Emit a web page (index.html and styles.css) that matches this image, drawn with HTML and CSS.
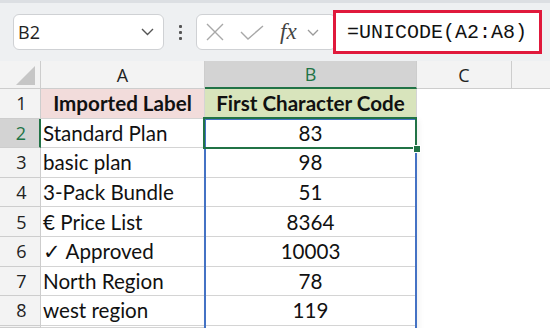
FILE: index.html
```html
<!DOCTYPE html>
<html lang="en">
<head>
    <meta charset="UTF-8">
    <meta name="viewport" content="width=device-width, initial-scale=1.0">
    <title>UNICODE example</title>
    <link rel="stylesheet" href="styles.css">
</head>
<body>
    <div class="toolbar">
        <div class="name-box">
            <span class="cell-ref">B2</span>
            <svg class="chev" width="13" height="8" viewBox="0 0 13 8"><polyline points="1,1 6.5,6.5 12,1" fill="none" stroke="#555" stroke-width="1.4"/></svg>
        </div>
        <div class="grip"><span></span><span></span><span></span></div>
        <div class="fx-box">
            <svg width="18" height="18" viewBox="0 0 18 18"><path d="M1 1 L17 17 M17 1 L1 17" stroke="#a8a8a8" stroke-width="1.4" fill="none"/></svg>
            <svg width="24" height="15" viewBox="0 0 24 15"><polyline points="1,7 8,14 23,1" fill="none" stroke="#a8a8a8" stroke-width="1.4"/></svg>
            <span class="fx">fx</span>
            <svg width="12" height="7" viewBox="0 0 12 7"><polyline points="1,1 6,6 11,1" fill="none" stroke="#9a9a9a" stroke-width="1.3"/></svg>
        </div>
        <div class="formula">=UNICODE(A2:A8)</div>
    </div>

    <div class="sheet">
        <div class="hd corner"><span class="tri"></span></div>
        <div class="hd col">A</div>
        <div class="hd col active-col">B</div>
        <div class="hd col">C</div>
        <div class="hd col last"></div>

        <div class="hd row">1</div>
        <div class="cell title pink">Imported Label</div>
        <div class="cell title green">First Character Code</div>
        <div class="blank"></div><div class="blank"></div>

        <div class="hd row active-row">2</div>
        <div class="cell">Standard Plan</div>
        <div class="cell num">83</div>
        <div class="blank"></div><div class="blank"></div>

        <div class="hd row">3</div>
        <div class="cell">basic plan</div>
        <div class="cell num">98</div>
        <div class="blank"></div><div class="blank"></div>

        <div class="hd row">4</div>
        <div class="cell">3-Pack Bundle</div>
        <div class="cell num">51</div>
        <div class="blank"></div><div class="blank"></div>

        <div class="hd row">5</div>
        <div class="cell">€ Price List</div>
        <div class="cell num">8364</div>
        <div class="blank"></div><div class="blank"></div>

        <div class="hd row">6</div>
        <div class="cell">✓ Approved</div>
        <div class="cell num">10003</div>
        <div class="blank"></div><div class="blank"></div>

        <div class="hd row">7</div>
        <div class="cell">North Region</div>
        <div class="cell num">78</div>
        <div class="blank"></div><div class="blank"></div>

        <div class="hd row">8</div>
        <div class="cell">west region</div>
        <div class="cell num">119</div>
        <div class="blank"></div><div class="blank"></div>

        <div class="hd row"></div>
        <div class="cell"></div>
        <div class="blank"></div>
        <div class="blank"></div><div class="blank"></div>

        <div class="range"></div>
        <div class="selection"><span class="handle"></span></div>
    </div>
</body>
</html>
```

FILE: styles.css
```css
* {
    box-sizing: border-box;
}

body {
    margin: 0;
    background: #fff;
    font-family: 'Lato', sans-serif;
    overflow: hidden;
}

.toolbar {
    height: 61px;
    background: #eef0f2;
    border-top: 3px solid #dcdfe3;
    display: flex;
    align-items: center;
    padding-left: 13px;
}

.name-box {
    width: 151px;
    height: 36px;
    background: #fff;
    border: 1px solid #cfd1d4;
    border-radius: 6px;
    display: flex;
    align-items: center;
    justify-content: space-between;
    padding: 0 9px 0 4px;
}

.cell-ref {
    font-family: 'Open Sans', sans-serif;
    font-size: 18px;
    color: #222;
}

.grip {
    width: 32px;
    display: flex;
    flex-direction: column;
    align-items: center;
    gap: 3px;
}

.grip span {
    width: 3px;
    height: 3px;
    background: #555;
    border-radius: 1px;
}

.fx-box {
    width: 140px;
    height: 36px;
    background: #fff;
    border: 1px solid #cfd1d4;
    border-radius: 6px;
    display: flex;
    align-items: center;
    gap: 16px;
    padding-left: 9px;
}

.fx {
    font-family: 'Liberation Serif', serif;
    font-style: italic;
    font-size: 23px;
    color: #444;
    margin-right: -6px;
}

.formula {
    margin-left: -3px;
    width: 209px;
    height: 44px;
    background: #fff;
    border: 3px solid #e0193c;
    font-family: 'Liberation Mono', monospace;
    font-size: 20px;
    color: #111;
    display: flex;
    align-items: center;
    padding-left: 11px;
    white-space: nowrap;
    position: relative;
}

.sheet {
    position: relative;
    display: grid;
    grid-template-columns: 41px 164px 212px 95px 1fr;
    grid-template-rows: 28px repeat(8, 29.6px) 2px;
}

.hd {
    background: #f3f3f3;
    border-right: 1px solid #cdcdcd;
    border-bottom: 1px solid #cdcdcd;
    font-family: 'Open Sans', sans-serif;
    font-size: 18px;
    color: #222;
    display: flex;
    align-items: center;
    justify-content: center;
}

.corner {
    position: relative;
}

.tri {
    position: absolute;
    right: 5px;
    bottom: 3px;
    width: 0;
    height: 0;
    border-left: 19px solid transparent;
    border-bottom: 19px solid #c6c6c6;
}

.col.last {
    border-right: none;
}

.active-col {
    background: #d3d3d3;
    color: #217346;
    border-bottom: 2px solid #217346;
}

.row {
    justify-content: center;
    padding-left: 3px;
}

.active-row {
    background: #d3d3d3;
    color: #217346;
    border-right: 2px solid #217346;
}

.cell {
    border-right: 1px solid #d4d4d4;
    border-bottom: 1px solid #d4d4d4;
    display: flex;
    align-items: center;
    padding-left: 2px;
    font-size: 20.6px;
    color: #111;
    white-space: nowrap;
}

.title {
    font-weight: bold;
    justify-content: center;
    padding-left: 0;
}

.pink {
    background: #f2dcdb;
}

.green {
    background: #d8e4bc;
}

.num {
    justify-content: center;
    padding-left: 0;
}

.blank {
    background: #fff;
}

.range {
    position: absolute;
    left: 204px;
    top: 57px;
    width: 213px;
    height: 238px;
    border: 2px solid #4472c4;
    box-shadow: 2px 2px 6px rgba(0,0,0,0.06);
}

.selection {
    position: absolute;
    left: 203px;
    top: 56px;
    width: 214px;
    height: 32px;
    border: 2px solid #217346;
}

.handle {
    position: absolute;
    right: -6px;
    bottom: -6px;
    width: 8px;
    height: 8px;
    background: #217346;
    border: 1px solid #fff;
}
```
